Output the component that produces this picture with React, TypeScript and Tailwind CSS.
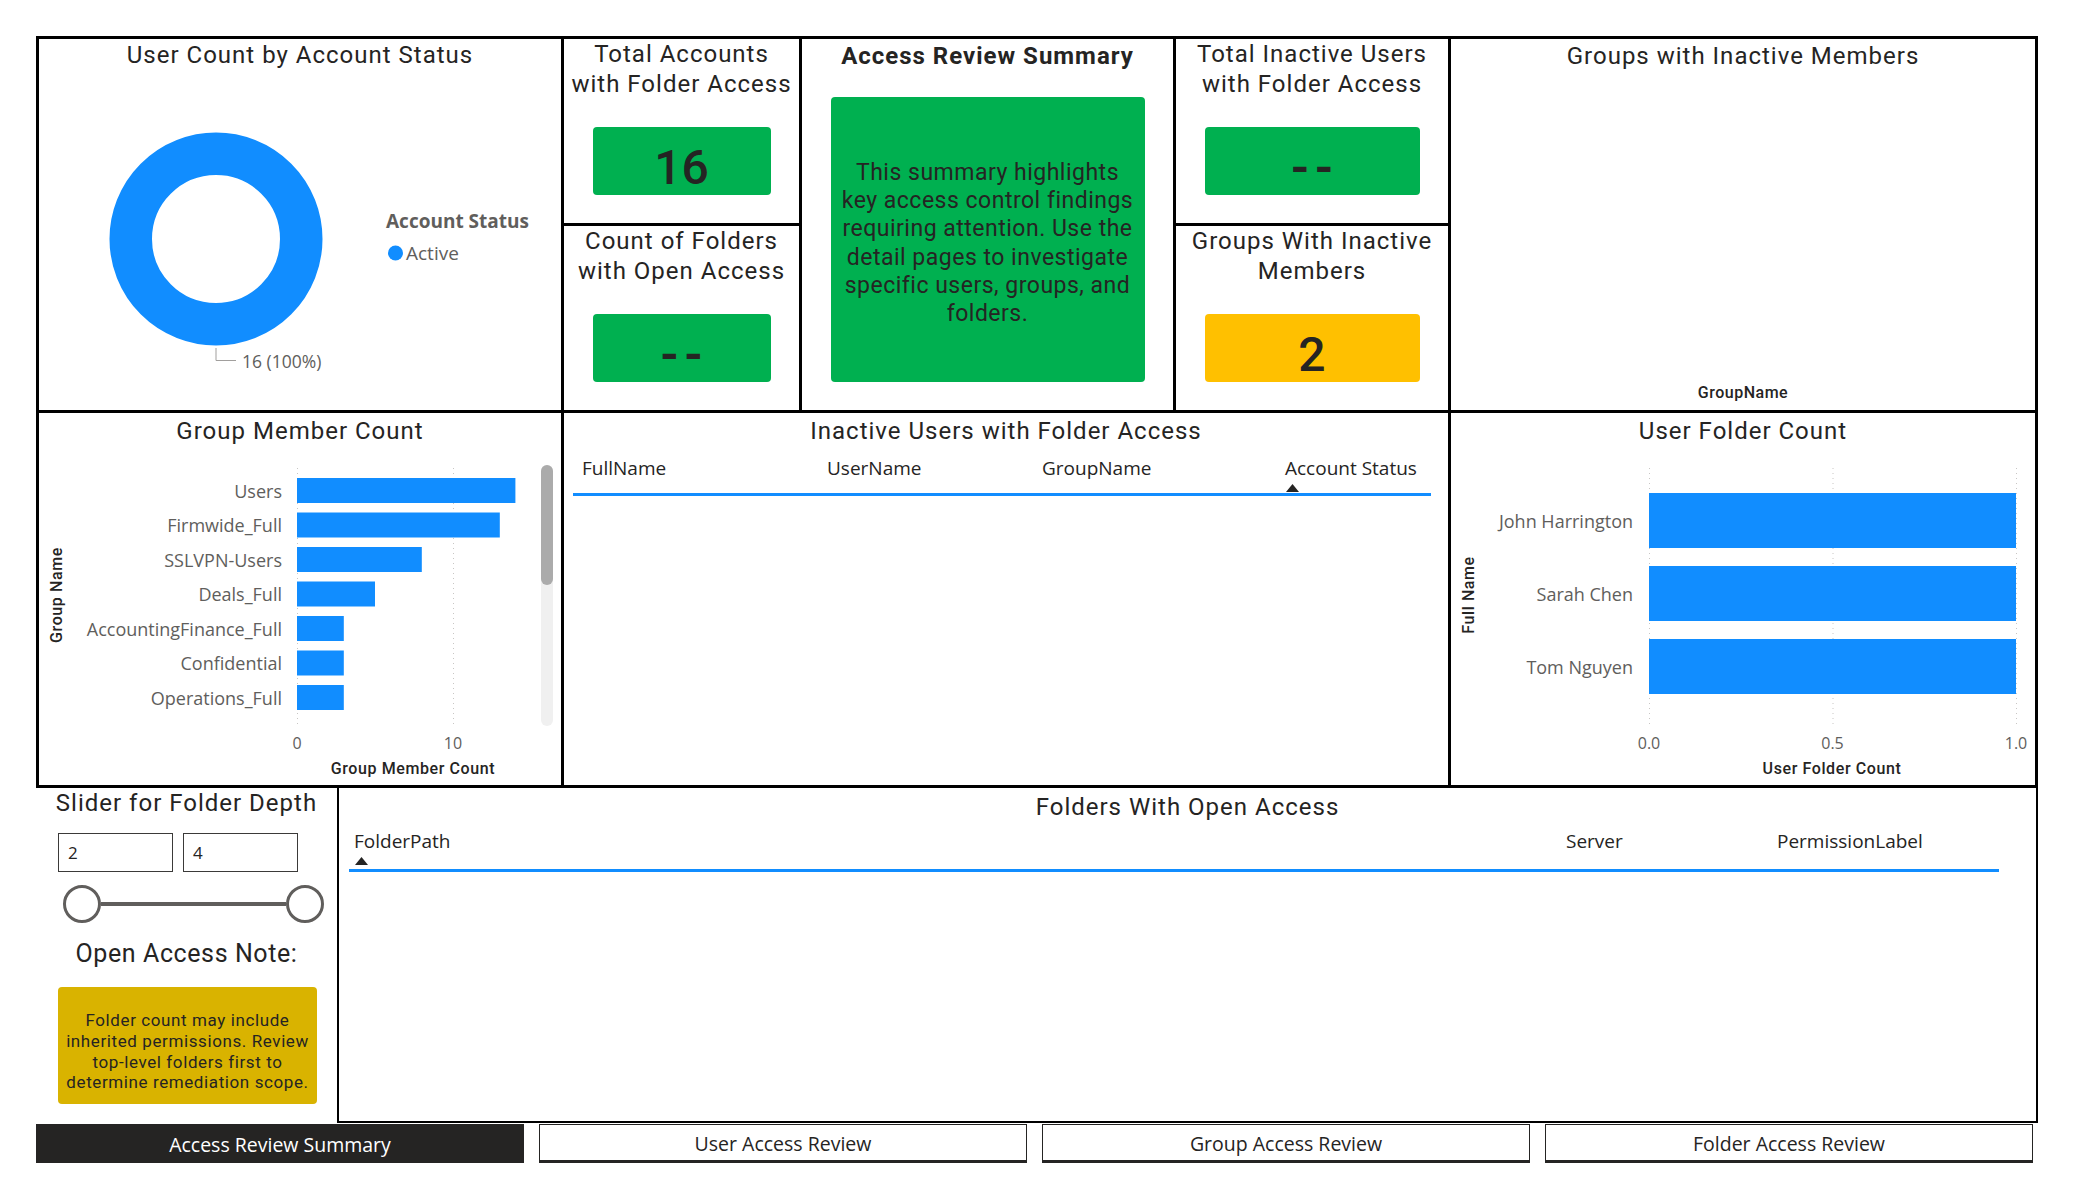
import React from "react";

const groups = [
  { name: "Users", v: 14 },
  { name: "Firmwide_Full", v: 13 },
  { name: "SSLVPN-Users", v: 8 },
  { name: "Deals_Full", v: 5 },
  { name: "AccountingFinance_Full", v: 3 },
  { name: "Confidential", v: 3 },
  { name: "Operations_Full", v: 3 },
];

const users = ["John Harrington", "Sarah Chen", "Tom Nguyen"];

const SANS = "'Open Sans', 'Noto Sans', sans-serif";
const DIN = "Roboto, 'Liberation Sans', sans-serif";

function Title({ children, className = "" }: { children: React.ReactNode; className?: string }) {
  return (
    <div className={`text-center text-[24px] leading-[28px] tracking-[1px] font-['Roboto',sans-serif] text-[#252423] ${className}`}>
      {children}
    </div>
  );
}

function Kpi({ title, value, tone, boxW }: { title: React.ReactNode; value: string; tone: "green" | "amber"; boxW: "narrow" | "wide" }) {
  return (
    <div className="flex h-full flex-col items-center bg-white">
      <Title className="leading-[30px]">{title}</Title>
      <div
        className={`mt-[28px] flex h-[68px] items-center justify-center rounded-[4px] pt-[14px] font-['Roboto',sans-serif] text-[48px] font-medium leading-none text-[#252423] ${
          tone === "green" ? "bg-[#00B050]" : "bg-[#FFC000]"
        } ${boxW === "narrow" ? "w-[178px]" : "w-[215px]"}`}
      >
        {value === "--" ? <span className="tracking-[5px] pl-[5px] font-bold">--</span> : value}
      </div>
    </div>
  );
}

function Donut() {
  return (
    <svg width={522} height={335} className="block">
      <circle cx={177} cy={164} r={85.25} fill="none" stroke="#118DFF" strokeWidth={42.5} />
      <polyline points="177,273 177,285.5 197,285.5" fill="none" stroke="#A19F9D" strokeWidth={1} />
      <text x={203} y={286} dominantBaseline="central" fontSize={17.5} fill="#605E5C" fontFamily={SANS}>
        16 (100%)
      </text>
      <text x={347} y={146} dominantBaseline="central" fontSize={19} fontWeight={700} fill="#605E5C" fontFamily={SANS}>
        Account Status
      </text>
      <circle cx={356.5} cy={178} r={7.5} fill="#118DFF" />
      <text x={367} y={178} dominantBaseline="central" fontSize={19} fill="#605E5C" fontFamily={SANS}>
        Active
      </text>
    </svg>
  );
}

function AxisTitle({ x, y, rotate, children }: { x: number; y: number; rotate?: boolean; children: React.ReactNode }) {
  return (
    <text
      transform={`translate(${x} ${y})${rotate ? " rotate(-90)" : ""}`}
      textAnchor="middle"
      dominantBaseline="central"
      fontSize={16}
      fontWeight={500}
      letterSpacing={0.6}
      fill="#252423"
      fontFamily={DIN}
    >
      {children}
    </text>
  );
}

function GroupChart() {
  const x0 = 258;
  const unit = 15.6;
  return (
    <svg width={522} height={336} className="block">
      <AxisTitle x={17} y={146} rotate>
        Group Name
      </AxisTitle>
      {[0, 10].map((t) => (
        <g key={t}>
          <line x1={x0 + t * unit + 0.5} x2={x0 + t * unit + 0.5} y1={19} y2={278} stroke="#C8C6C4" strokeDasharray="1 4" />
          <text x={x0 + t * unit} y={294} textAnchor="middle" dominantBaseline="central" fontSize={16} fill="#605E5C" fontFamily={SANS}>
            {t}
          </text>
        </g>
      ))}
      {groups.map((g, i) => (
        <g key={g.name}>
          <text x={243} y={41.5 + i * 34.5} textAnchor="end" dominantBaseline="central" fontSize={18} fill="#605E5C" fontFamily={SANS}>
            {g.name}
          </text>
          <rect x={x0} y={29 + i * 34.5} width={g.v * unit} height={25} fill="#118DFF" />
        </g>
      ))}
      <AxisTitle x={374} y={319}>
        Group Member Count
      </AxisTitle>
      <rect x={502} y={16} width={12} height={261} rx={6} fill="#F0F0F0" />
      <rect x={502} y={16} width={12} height={120} rx={6} fill="#ABABAB" />
    </svg>
  );
}

function UserChart() {
  const x0 = 198;
  const w = 367;
  return (
    <svg width={584} height={336} className="block">
      <AxisTitle x={17} y={146} rotate>
        Full Name
      </AxisTitle>
      {["0.0", "0.5", "1.0"].map((t, i) => (
        <g key={t}>
          <line x1={x0 + (i * w) / 2 + 0.5} x2={x0 + (i * w) / 2 + 0.5} y1={19} y2={278} stroke="#C8C6C4" strokeDasharray="1 4" />
          <text x={x0 + (i * w) / 2} y={294} textAnchor="middle" dominantBaseline="central" fontSize={16} fill="#605E5C" fontFamily={SANS}>
            {t}
          </text>
        </g>
      ))}
      {users.map((u, i) => (
        <g key={u}>
          <text x={182} y={71.5 + i * 73} textAnchor="end" dominantBaseline="central" fontSize={18} fill="#605E5C" fontFamily={SANS}>
            {u}
          </text>
          <rect x={x0} y={44 + i * 73} width={w} height={55} fill="#118DFF" />
        </g>
      ))}
      <AxisTitle x={381} y={319}>
        User Folder Count
      </AxisTitle>
    </svg>
  );
}

function SortArrow() {
  return (
    <svg width={13} height={8} className="block">
      <polygon points="0,8 6.5,0 13,8" fill="#252423" />
    </svg>
  );
}

function HeaderCell({
  label,
  width,
  pad,
  sorted,
  tall,
}: {
  label: string;
  width: string;
  pad: string;
  sorted?: boolean;
  tall?: boolean;
}) {
  return (
    <div className={`${width} ${pad} ${tall ? "h-[43px]" : "h-[40px]"} border-b-[3px] border-[#118DFF]`}>
      <div className="text-[19px] leading-[24px] text-[#252423]">{label}</div>
      {sorted && (
        <div className="mt-[4px] pl-[1px]">
          <SortArrow />
        </div>
      )}
    </div>
  );
}

function Tab({ label, active }: { label: string; active?: boolean }) {
  return (
    <div
      className={`flex h-[39px] w-[488px] items-center justify-center pt-[2px] text-[19.5px] ${
        active ? "bg-[#252423] text-white" : "border border-b-[3px] border-[#252423] bg-white text-[#252423]"
      }`}
    >
      {label}
    </div>
  );
}

export default function App() {
  return (
    <div className="h-[1200px] w-[2075px] bg-white pl-[36px] pt-[36px] font-['Open_Sans',sans-serif] text-[#252423]">
      <div className="grid w-[2002px] grid-cols-[522px_235px_371px_272px_584px] grid-rows-[184px_184px_372px] gap-[3px] bg-black p-[3px]">
        {/* donut */}
        <div className="col-start-1 row-span-2 row-start-1 bg-white">
          <Title className="h-[36px] pt-[2px]">User Count by Account Status</Title>
          <Donut />
        </div>

        <div className="col-start-2 row-start-1">
          <Kpi
            title={
              <>
                Total Accounts
                <br />
                with Folder Access
              </>
            }
            value="16"
            tone="green"
            boxW="narrow"
          />
        </div>
        <div className="col-start-2 row-start-2">
          <Kpi
            title={
              <>
                Count of Folders
                <br />
                with Open Access
              </>
            }
            value="--"
            tone="green"
            boxW="narrow"
          />
        </div>

        {/* summary text */}
        <div className="col-start-3 row-span-2 row-start-1 flex flex-col items-center bg-white pt-[3px]">
          <Title className="font-bold">Access Review Summary</Title>
          <div className="mt-[27px] flex h-[285px] w-[314px] items-center justify-center rounded-[4px] bg-[#00B050] pt-[8px] text-center font-['Roboto',sans-serif] text-[23px] leading-[28.3px] tracking-[0.5px] text-[#252423]">
            <p>
              This summary highlights
              <br />
              key access control findings
              <br />
              requiring attention. Use the
              <br />
              detail pages to investigate
              <br />
              specific users, groups, and
              <br />
              folders.
            </p>
          </div>
        </div>

        <div className="col-start-4 row-start-1">
          <Kpi
            title={
              <>
                Total Inactive Users
                <br />
                with Folder Access
              </>
            }
            value="--"
            tone="green"
            boxW="wide"
          />
        </div>
        <div className="col-start-4 row-start-2">
          <Kpi
            title={
              <>
                Groups With Inactive
                <br />
                Members
              </>
            }
            value="2"
            tone="amber"
            boxW="wide"
          />
        </div>

        {/* empty group chart */}
        <div className="col-start-5 row-span-2 row-start-1 flex flex-col bg-white pt-[3px]">
          <Title>Groups with Inactive Members</Title>
          <div className="flex-1" />
          <div className="pb-[7px] text-center font-['Roboto',sans-serif] text-[16px] font-medium leading-[20px] tracking-[0.5px] text-[#252423]">
            GroupName
          </div>
        </div>

        {/* row 2 */}
        <div className="col-start-1 row-start-3 bg-white">
          <Title className="h-[36px] pt-[4px]">Group Member Count</Title>
          <GroupChart />
        </div>

        <div className="col-span-3 col-start-2 row-start-3 bg-white pt-[4px]">
          <Title>Inactive Users with Folder Access</Title>
          <div className="mx-[9px] mt-[11px] flex">
            <HeaderCell label="FullName" width="w-[245px]" pad="pl-[9px]" />
            <HeaderCell label="UserName" width="w-[217px]" pad="pl-[9px]" />
            <HeaderCell label="GroupName" width="w-[241px]" pad="pl-[7px]" />
            <HeaderCell label="Account Status" width="w-[155px]" pad="pl-[9px]" sorted />
          </div>
        </div>

        <div className="col-start-5 row-start-3 bg-white">
          <Title className="h-[36px] pt-[4px]">User Folder Count</Title>
          <UserChart />
        </div>
      </div>

      {/* row 3 */}
      <div className="flex h-[335px] w-[2002px]">
        <div className="flex w-[301px] flex-col items-center pt-[1px]">
          <Title>Slider for Folder Depth</Title>
          <div className="mt-[16px] flex w-full gap-[10px] pl-[22px]">
            <div className="flex h-[39px] w-[115px] items-center border border-[#3b3a39] pl-[9px] text-[17px] text-[#252423]">2</div>
            <div className="flex h-[39px] w-[115px] items-center border border-[#3b3a39] pl-[9px] text-[17px] text-[#252423]">4</div>
          </div>
          <div className="mt-[13px] flex w-full items-center pl-[27px]">
            <div className="h-[38px] w-[38px] rounded-full border-[3px] border-[#605E5C] bg-white" />
            <div className="h-[4px] w-[185px] bg-[#605E5C]" />
            <div className="h-[38px] w-[38px] rounded-full border-[3px] border-[#605E5C] bg-white" />
          </div>
          <div className="mt-[16px] text-center font-['Roboto',sans-serif] text-[25px] leading-[30px] tracking-[0.6px] text-[#252423]">
            Open Access Note:
          </div>
          <div className="mt-[18px] ml-[2px] flex h-[117px] w-[259px] items-center justify-center rounded-[4px] bg-[#D9B300] pt-[12px] text-center font-['Roboto',sans-serif] text-[17px] leading-[20.7px] tracking-[0.6px] text-[#252423]">
            <p>
              Folder count may include
              <br />
              inherited permissions. Review
              <br />
              top-level folders first to
              <br />
              determine remediation scope.
            </p>
          </div>
        </div>

        <div className="h-[335px] flex-1 border-x-2 border-b-2 border-black bg-white pt-[5px]">
          <Title>Folders With Open Access</Title>
          <div className="ml-[10px] mt-[8px] flex w-[1650px]">
            <HeaderCell label="FolderPath" width="w-[1209px]" pad="pl-[5px]" sorted tall />
            <HeaderCell label="Server" width="w-[212px]" pad="pl-[8px]" tall />
            <HeaderCell label="PermissionLabel" width="w-[229px]" pad="pl-[7px]" tall />
          </div>
        </div>
      </div>

      {/* page tabs */}
      <div className="mt-[1px] flex w-[2002px] gap-[15px]">
        <Tab label="Access Review Summary" active />
        <Tab label="User Access Review" />
        <Tab label="Group Access Review" />
        <Tab label="Folder Access Review" />
      </div>
    </div>
  );
}
